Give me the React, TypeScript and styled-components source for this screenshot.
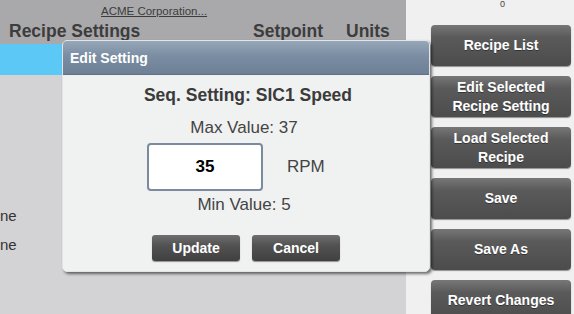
import React from 'react';
import styled, { createGlobalStyle } from 'styled-components';

const GlobalStyle = createGlobalStyle`
  html, body {
    margin: 0;
    padding: 0;
    width: 574px;
    height: 314px;
    overflow: hidden;
    font-family: 'Liberation Sans', Arial, sans-serif;
  }
`;

const SPage = styled.div`
  position: relative;
  display: flex;
  width: 574px;
  height: 314px;
  background: #eff0ef;
`;

const SMain = styled.div`
  width: 406px;
  display: flex;
  flex-direction: column;
  background: #d3d3d5;
`;

const SHeader = styled.div`
  height: 44px;
  background: #a9a9ab;
  position: relative;
  display: flex;
  align-items: flex-end;
  padding: 0 0 2px 9px;
  box-sizing: border-box;
`;

const SCompany = styled.a`
  position: absolute;
  left: 101px;
  top: 5px;
  font-size: 11.5px;
  color: #3c3c3c;
  text-decoration: underline;
`;

const SHeadCell = styled.div<{ $width: number }>`
  width: ${({ $width }) => $width}px;
  font-size: 17.5px;
  font-weight: bold;
  color: #3d3d3d;
  white-space: nowrap;
`;

const SSelectedRow = styled.div`
  height: 31px;
  background: #5bc8f5;
`;

const SRows = styled.div`
  display: flex;
  flex-direction: column;
  gap: 11px;
  padding-top: 132px;
`;

const SRowText = styled.div`
  font-size: 15px;
  color: #333;
  line-height: 18px;
`;

const SSide = styled.div`
  flex: 1;
  display: flex;
  flex-direction: column;
  gap: 10px;
  padding: 25px 3px 0 25px;
  position: relative;
`;

const SCounter = styled.span`
  position: absolute;
  top: 0;
  left: 94px;
  font-size: 9px;
  line-height: 9px;
  color: #444;
`;

const SSideButton = styled.button`
  height: 41px;
  width: 140px;
  flex-shrink: 0;
  border: none;
  border-radius: 4px;
  background: linear-gradient(#777778 0%, #5a5a5b 30%, #4c4c4d 100%);
  box-shadow: 0 1px 1px rgba(0, 0, 0, 0.4);
  color: #fff;
  font-family: inherit;
  font-size: 14px;
  font-weight: bold;
  line-height: 19px;
  padding: 0 12px;
  text-shadow: 0 1px 0 rgba(0, 0, 0, 0.4);
`;

const SDialog = styled.div`
  position: absolute;
  left: 62px;
  top: 40px;
  width: 368px;
  height: 232px;
  background: #f0f1f1;
  border: 1px solid #e2e4e6;
  border-radius: 5px;
  box-shadow: 2px 2px 3px rgba(0, 0, 0, 0.55);
  box-sizing: border-box;
  overflow: hidden;
  display: flex;
  flex-direction: column;
`;

const SDialogTitle = styled.div`
  height: 34px;
  background: linear-gradient(#97a7b9 0%, #7a8da2 45%, #6d8096 100%);
  border-bottom: 1px solid #5f7186;
  color: #fff;
  font-size: 14px;
  font-weight: bold;
  line-height: 34px;
  padding-left: 7px;
  box-sizing: border-box;
`;

const SDialogBody = styled.div`
  display: flex;
  flex-direction: column;
  align-items: center;
`;

const SSettingName = styled.div`
  margin-top: 10px;
  font-size: 17.5px;
  font-weight: bold;
  color: #3b3b3b;
  margin-left: 4px;
`;

const SLimit = styled.div<{ $top: number }>`
  margin-top: ${({ $top }) => $top}px;
  font-size: 17px;
  color: #444;
  margin-right: 4px;
`;

const SInputRow = styled.div`
  display: flex;
  align-items: center;
  align-self: flex-start;
  margin-top: 5px;
  margin-left: 84px;
  gap: 24px;
`;

const SInput = styled.div`
  width: 116px;
  height: 48px;
  box-sizing: border-box;
  border: 2px solid #7b8a9c;
  border-radius: 4px;
  background: #fff;
  display: flex;
  align-items: center;
  justify-content: center;
  font-size: 17px;
  font-weight: bold;
  color: #000;
`;

const SUnit = styled.span`
  font-size: 17px;
  color: #444;
`;

const SActions = styled.div`
  display: flex;
  gap: 12px;
  margin-top: 20px;
`;

const SDialogButton = styled.button`
  width: 88px;
  height: 26px;
  border: none;
  border-radius: 3px;
  background: linear-gradient(#6f6f70 0%, #525253 40%, #404041 100%);
  box-shadow: 0 1px 1px rgba(0, 0, 0, 0.4);
  color: #fff;
  font-family: inherit;
  font-size: 14px;
  font-weight: bold;
`;

const sideButtons = [
  'Recipe List',
  'Edit Selected Recipe Setting',
  'Load Selected Recipe',
  'Save',
  'Save As',
  'Revert Changes',
];

export default function App() {
  return (
    <SPage>
      <GlobalStyle />
      <SMain>
        <SHeader>
          <SCompany>ACME Corporation...</SCompany>
          <SHeadCell $width={244}>Recipe Settings</SHeadCell>
          <SHeadCell $width={93}>Setpoint</SHeadCell>
          <SHeadCell $width={60}>Units</SHeadCell>
        </SHeader>
        <SSelectedRow />
        <SRows>
          <SRowText>ne</SRowText>
          <SRowText>ne</SRowText>
        </SRows>
      </SMain>
      <SSide>
        <SCounter>0</SCounter>
        {sideButtons.map((label) => (
          <SSideButton key={label}>{label}</SSideButton>
        ))}
      </SSide>
      <SDialog>
        <SDialogTitle>Edit Setting</SDialogTitle>
        <SDialogBody>
          <SSettingName>Seq. Setting: SIC1 Speed</SSettingName>
          <SLimit $top={12}>Max Value: 37</SLimit>
          <SInputRow>
            <SInput>35</SInput>
            <SUnit>RPM</SUnit>
          </SInputRow>
          <SLimit $top={4}>Min Value: 5</SLimit>
          <SActions>
            <SDialogButton>Update</SDialogButton>
            <SDialogButton>Cancel</SDialogButton>
          </SActions>
        </SDialogBody>
      </SDialog>
    </SPage>
  );
}
